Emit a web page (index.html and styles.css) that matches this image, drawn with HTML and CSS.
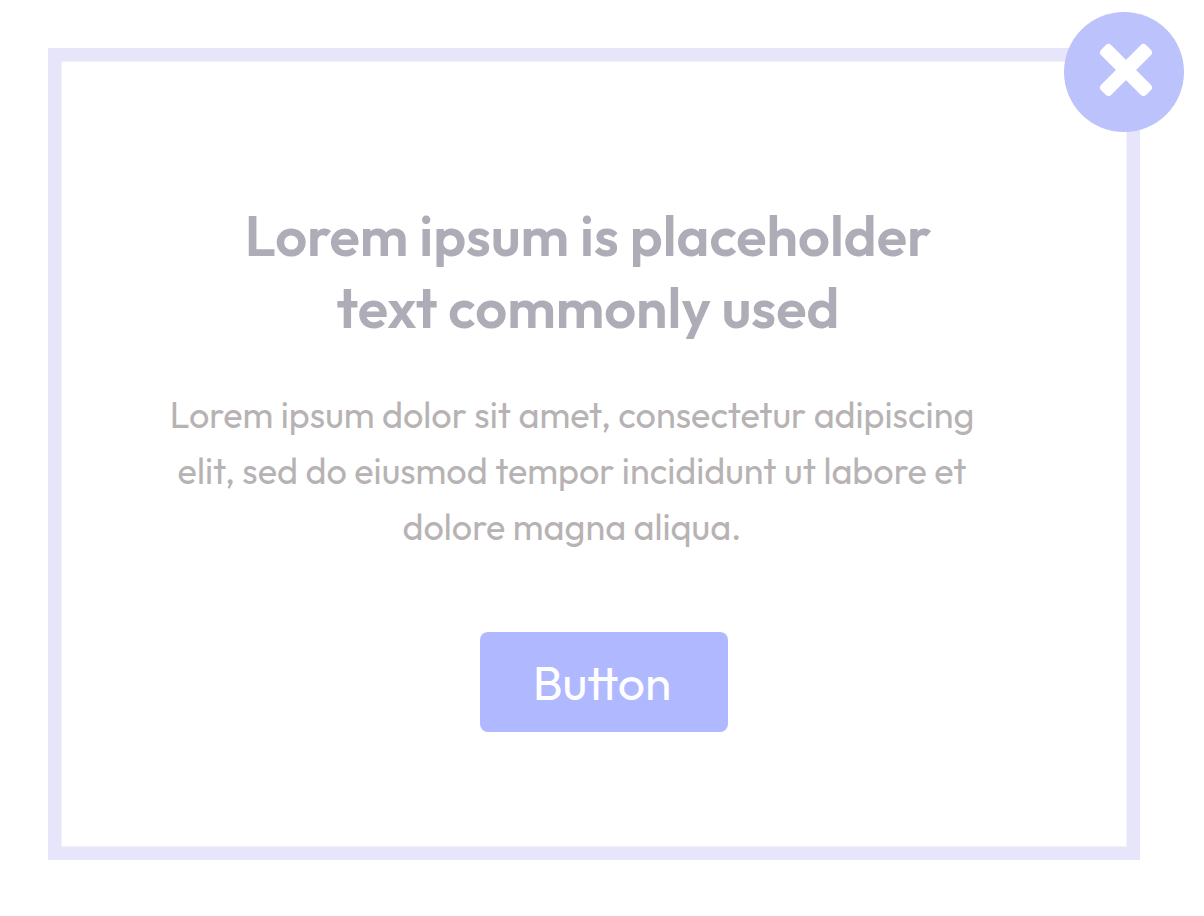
FILE: index.html
```html
<!DOCTYPE html>
<html lang="en">
<head>
<meta charset="utf-8">
<title>Dialog</title>
<link rel="stylesheet" href="styles.css">
</head>
<body>
<main class="dialog">
  <button class="close" aria-label="Close">
    <svg class="close-icon" viewBox="-26 -26 52 52"><rect x="-31.9" y="-7.2" width="63.8" height="14.4" rx="4" transform="rotate(45)"/><rect x="-31.9" y="-7.2" width="63.8" height="14.4" rx="4" transform="rotate(-45)"/></svg>
  </button>
  <h1 class="title"><span class="line">Lorem ipsum is placeholder</span><span class="line">text commonly used</span></h1>
  <p class="copy"><span class="line">Lorem ipsum dolor sit amet, consectetur adipiscing</span><span class="line">elit, sed do eiusmod tempor incididunt ut labore et</span><span class="line">dolore magna aliqua.</span></p>
  <button class="action">Button</button>
</main>
</body>
</html>
```
FILE: styles.css
```css
* { box-sizing: border-box; }
body { margin: 0; padding: 48px; background: #fff; font-family: Outfit, Lato, sans-serif; }
.dialog { position: relative; width: 1092px; height: 812px; border: 13px solid #e6e5fa; box-shadow: inset 0 0 0 0.5px #e6e5fa; display: flex; flex-direction: column; align-items: center; padding-top: 139px; }
.close { position: absolute; top: -49px; right: -57px; width: 120px; height: 120px; border: 0; border-radius: 50%; background: #bcc2fb; padding: 0; }
.close-icon { position: absolute; left: 36px; top: 32px; width: 52px; height: 52px; fill: #fff; overflow: visible; }
.line { display: block; white-space: nowrap; }
.title { margin: 0 12px 0 0; font-size: 56px; line-height: 72px; font-weight: 600; color: #aeacb7; text-align: center; }
.copy { margin: 43px 44px 0 0; font-size: 36px; line-height: 56px; color: #b7b3b4; text-align: center; }
.action { margin: 77px 0 0 20px; width: 248px; height: 100px; border: 0; border-radius: 8px; background: #b0b8ff; color: #fff; font-family: inherit; font-size: 48px; padding: 0 4px 0 0; }
```
